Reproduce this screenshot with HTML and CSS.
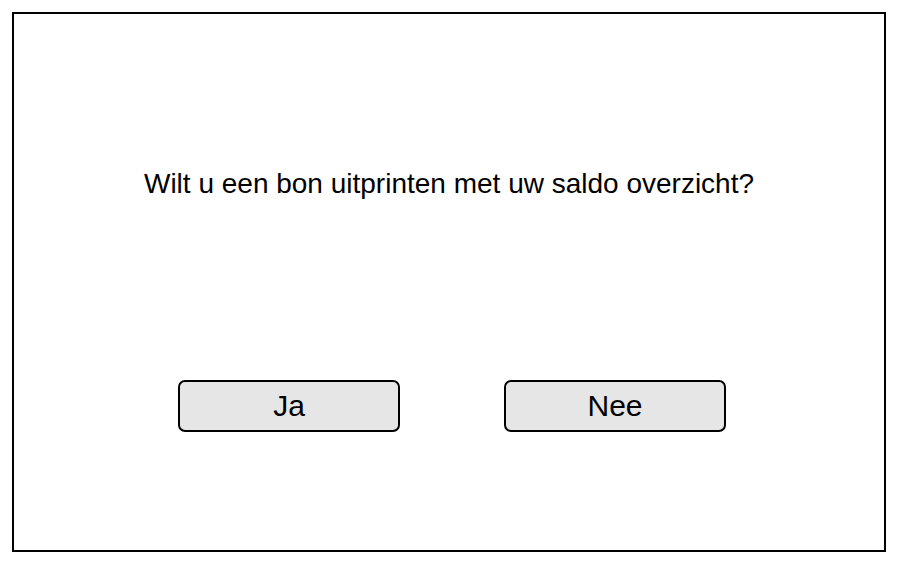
FILE: index.html
```html
<!DOCTYPE html>
<html>
<head>
<meta charset="utf-8">
<link rel="stylesheet" href="styles.css">
</head>
<body>
<div class="frame">
  <p class="question">Wilt u een bon uitprinten met uw saldo overzicht?</p>
  <div class="actions">
    <button class="btn">Ja</button>
    <button class="btn">Nee</button>
  </div>
</div>
</body>
</html>
```

FILE: styles.css
```css
html, body {
  margin: 0;
  padding: 0;
  background: #fff;
}
body {
  padding: 12px;
  font-family: "Liberation Sans", Arial, sans-serif;
  color: #000;
}
.frame {
  box-sizing: border-box;
  width: 874px;
  height: 540px;
  border: 2px solid #000;
  display: flex;
  flex-direction: column;
}
.question {
  margin: 154px 0 0 0;
  font-size: 28px;
  line-height: 32px;
  text-align: center;
}
.actions {
  margin-top: 180px;
  padding-left: 164px;
  display: flex;
  gap: 104px;
}
.btn {
  box-sizing: border-box;
  width: 222px;
  height: 52px;
  border: 2px solid #000;
  border-radius: 7px;
  background: #e6e6e6;
  font-family: "Liberation Sans", Arial, sans-serif;
  font-size: 30px;
  color: #000;
  padding: 0;
}
```
